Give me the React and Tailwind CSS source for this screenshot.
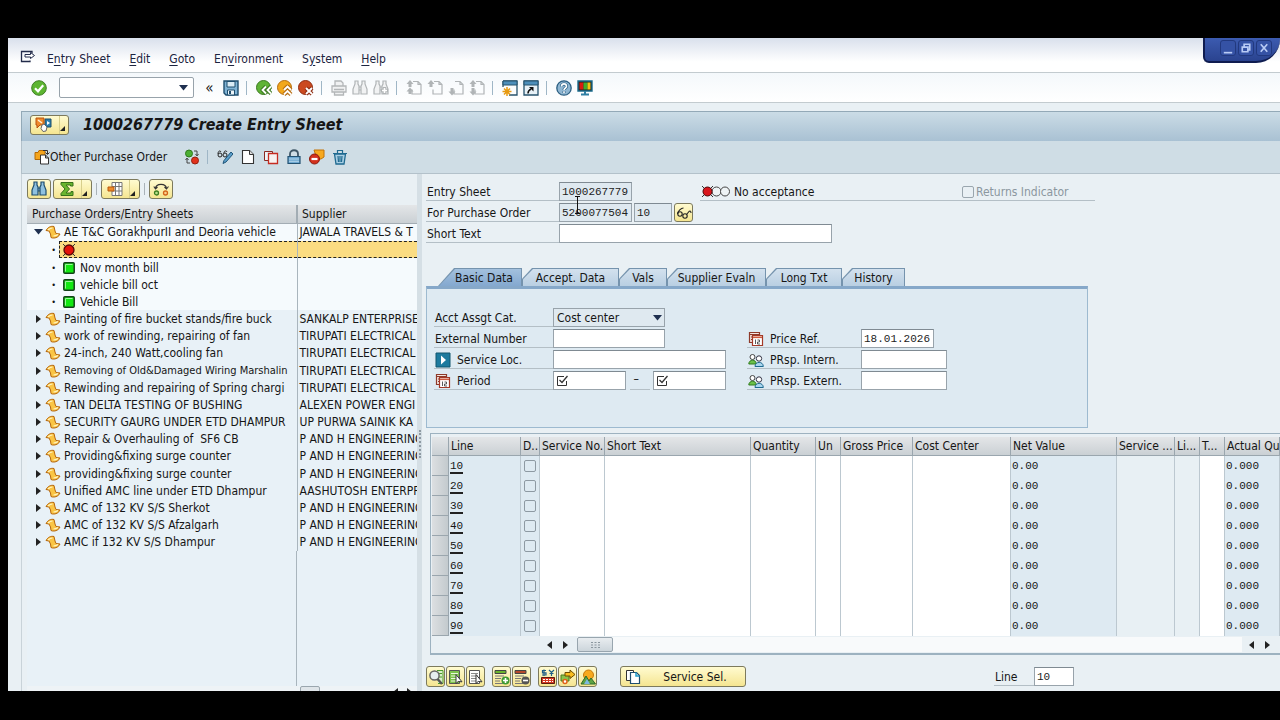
import React, { useState } from 'react';

const Svg = ({ size = 16, w, children }) => (
    <svg width={w || size} height={size} viewBox={`0 0 ${w || size} ${size}`} fill="none" className="shrink-0" aria-hidden="true">
        {children}
    </svg>
);

/* ---------- icons ---------- */
const CheckIcon = () => (
    <Svg>
        <circle cx="8" cy="8" r="7.3" fill="#5cb531" stroke="#3f7d25" />
        <path d="M4 8.3l3 3 5.2-6" stroke="#fff" strokeWidth="2.2" />
    </Svg>
);
const SaveIcon = () => (
    <Svg>
        <path d="M1 1h14v14H3l-2-2z" fill="#7fb2d4" stroke="#1f4e6e" strokeWidth="1.4" />
        <path d="M4 1.5h8V7H4z" fill="#d9ebf5" stroke="#1f4e6e" />
        <path d="M4.5 10h7v5h-7z" fill="#eef6fa" stroke="#1f4e6e" />
        <path d="M6 11h2v3H6z" fill="#1f4e6e" />
    </Svg>
);
const RoundIcon = ({ fill, edge, mark }) => (
    <Svg>
        <circle cx="7.5" cy="7.5" r="7" fill={fill} stroke={edge} />
        <path d={mark} stroke={edge} strokeWidth="4" strokeLinejoin="round" />
        <path d={mark} stroke="#fff" strokeWidth="1.8" />
    </Svg>
);
const BackIcon = () => <RoundIcon fill="#5fb336" edge="#3d7a22" mark="M10 6.5L6.5 10l3.5 3.5M15 6.5L11.5 10l3.5 3.5" />;
const UpIcon = () => <RoundIcon fill="#f2a81d" edge="#b56c10" mark="M7 10l3.5-3.5L14 10M7 14.5L10.5 11l3.5 3.5" />;
const CancelIcon = () => <RoundIcon fill="#cb4a20" edge="#8f2d12" mark="M8 8l6 6M14 8l-6 6" />;
const PrintIcon = () => (
    <Svg>
        <path d="M4 6V1h6l2 2v3M1 6h14v6H1zM3.5 12v3h9v-3M3 9.5h10" stroke="#b3b6b8" strokeWidth="1.3" fill="#f0f1f2" />
    </Svg>
);
const Binoculars = ({ stroke, fill, plus }) => (
    <Svg>
        <path d="M3 1h3v3l1 2v8H1V9l2-5zM10 1h3v3l2 5v5H9V6l1-2zM7 7h2v3H7z" fill={fill} stroke={stroke} strokeWidth="1.2" />
        {plus && <path d="M11.5 7v7M8 10.5h7" stroke={stroke} strokeWidth="3.6" />}
        {plus && <path d="M11.5 8v5M9 10.5h5" stroke="#fff" strokeWidth="1.6" />}
    </Svg>
);
const PageIcon = ({ dir }) => (
    <Svg>
        <path d="M7 1.5h5l3 3V14H6V9.5M12 1.5v3h3" stroke="#b0b4b6" strokeWidth="1.2" />
        {(dir === 'first' || dir === 'up' || dir === 'last') && <path d="M4 0l3.5 4h-2v3h-3V4h-2z" fill="#b0b4b6" />}
        {(dir === 'down' || dir === 'last') && <path d="M4 15.5L.5 11.5h2V8h3v3.5h2z" fill="#b0b4b6" />}
        {dir === 'first' && <path d="M4 7.5l3.5 4h-2V14h-3v-2.5h-2z" fill="#b0b4b6" />}
    </Svg>
);
const SessionIcon = () => (
    <Svg>
        <path d="M1 1h14v14H7M1 1v6" stroke="#27536d" strokeWidth="1.3" />
        <path d="M1 1h14v4H1z" fill="#4d8fbb" stroke="#27536d" />
        <path d="M5 7v9M.5 11.5h9M2 8.5l6 6M8 8.5l-6 6" stroke="#e79a12" strokeWidth="1.5" />
    </Svg>
);
const ShortcutIcon = () => (
    <Svg>
        <path d="M1 1h14v14H1z" fill="#e7f1f7" stroke="#27536d" strokeWidth="1.3" />
        <path d="M1 1h14v4H1z" fill="#4d8fbb" stroke="#27536d" />
        <path d="M5 13.5c0-2.5 1-3.5 3-4.5" stroke="#111" strokeWidth="1.5" />
        <path d="M6 7h4.5v4.5z" fill="#111" />
    </Svg>
);
const HelpIcon = () => (
    <Svg>
        <circle cx="8" cy="8" r="7.2" fill="#8fb6d2" stroke="#2c5f82" strokeWidth="1.3" />
        <path d="M5.5 6.5c0-3.5 5-3.5 5 0C10.5 8 8 8 8 10M8 11.3v1.7" stroke="#2c5f82" strokeWidth="3" />
        <path d="M5.5 6.5c0-3.5 5-3.5 5 0C10.5 8 8 8 8 10M8 11.3v1.7" stroke="#fff" strokeWidth="1.6" />
    </Svg>
);
const MonitorIcon = () => (
    <Svg>
        <path d="M1 1h14v10H1z" fill="#222" stroke="#1a6a8a" strokeWidth="1.4" />
        <path d="M2.5 2.5h4v7h-4z" fill="#d81c12" />
        <path d="M6.5 2.5h4v7h-4z" fill="#3fae2a" />
        <path d="M10.5 2.5h3v7h-3z" fill="#f3c614" />
        <path d="M8 11v3M4 14.5h8" stroke="#2f7fa3" strokeWidth="2" />
    </Svg>
);
const ExitMenuIcon = () => (
    <Svg>
        <path d="M10 11.5v1H1.5v-10H12v2" stroke="#222b4a" strokeWidth="1.3" />
        <path d="M5 5.5h5.5V3.5l4 3-4 3V8H5z" fill="#fff" stroke="#222b4a" />
    </Svg>
);
const ServicesIcon = () => (
    <Svg w={18}>
        <path d="M10 2h6v8h-6z" fill="#2d7fae" stroke="#1d4e6b" />
        <path d="M12 4l3 2-3 2z" fill="#fff" />
        <path d="M1 1h8v7H5l-3 3V8H1z" fill="#ef8a2b" stroke="#b8530e" />
        <path d="M3 3l4 3" stroke="#fff2d8" strokeWidth="1.5" />
        <path d="M7 8l2-1 3 3-1 4-3 .5-2-3z" fill="#fff" stroke="#666" />
    </Svg>
);
const OtherOrderIcon = () => (
    <Svg>
        <path d="M1 3.500h3l1-2h6v9H1z" fill="#f5a51c" stroke="#b46a08" />
        <path d="M6.5 6h5l3 3v6h-8zM11.5 6v3h3" fill="#fff" stroke="#333" />
        <path d="M9 1.500h4.500V5M11.500 3.500l2 2 2-2" stroke="#333" />
    </Svg>
);
const ToggleIcon = () => (
    <Svg>
        <circle cx="5" cy="4.5" r="3.5" fill="#4caf33" stroke="#2f7a1c" />
        <circle cx="11" cy="11.5" r="3.5" fill="#e2311c" stroke="#93200f" />
        <path d="M10 2h3v4M11.5 5l1.5 2 1.5-2M6 14H3v-4M1.5 11L3 9l1.5 2" stroke="#444" />
    </Svg>
);
const DisplayChangeIcon = () => (
    <Svg>
        <path d="M1 5c0-3 2-4 3-2M7 4c0-2 2-3 3-1" stroke="#222" />
        <circle cx="3" cy="6" r="2" stroke="#222" />
        <circle cx="8" cy="6" r="2" stroke="#222" />
        <path d="M14 3l2 2-7 8-3 1.5 1-3z" fill="#5c9fca" stroke="#1f5579" />
    </Svg>
);
const NewIcon = () => (
    <Svg>
        <path d="M2.5 1.5h7l4 4v9h-11z" fill="#fff" stroke="#333" strokeWidth="1.1" />
        <path d="M9.5 1.5v4h4" fill="#ddd" stroke="#333" />
    </Svg>
);
const CopyRedIcon = () => (
    <Svg>
        <path d="M1.5 2.5h8v9h-8z" fill="#eef3f6" stroke="#8a2a22" />
        <path d="M5.5 4.5h9v10h-9z" fill="#f7f2f1" stroke="#c62c22" strokeWidth="1.3" />
    </Svg>
);
const LockIcon = () => (
    <Svg>
        <path d="M4 8V5c0-5 8-5 8 0v3" stroke="#3f5666" strokeWidth="1.8" />
        <path d="M2 7.5h12v7H2z" fill="#6fa9d2" stroke="#235272" strokeWidth="1.2" />
        <path d="M3 10h10M3 12.3h10" stroke="#b5d5ea" />
    </Svg>
);
const RejectIcon = () => (
    <Svg>
        <path d="M5 1h10v7l-3 2H8z" fill="#f7a91e" stroke="#c27307" />
        <circle cx="5.5" cy="10" r="5" fill="#d3301c" stroke="#8a1a0c" />
        <path d="M2.5 10h6" stroke="#fff" strokeWidth="2.2" />
    </Svg>
);
const TrashIcon = () => (
    <Svg>
        <path d="M2.5 5h11l-1.5 10H4z" fill="#a9cfe4" stroke="#1f6a90" strokeWidth="1.3" />
        <path d="M1 4.5h14M5.5 4V1.5h5V4M6 7l.5 6M10 7l-.5 6M8 7v6" stroke="#1f6a90" strokeWidth="1.2" />
    </Svg>
);
const SumIcon = () => (
    <Svg>
        <path d="M2 1.5h12V5h-2.5V4H7l3.5 4L7 12h5v-1.5h2v4H2v-2L6 8 2 3.5z" fill="#6ab52f" stroke="#37701a" />
    </Svg>
);
const LayoutIcon = () => (
    <Svg>
        <path d="M5 1.5h10v13H5zM5 5.5h10M5 10h10M8.5 1.5v13M12 1.5v13" fill="#fff" stroke="#777" />
        <path d="M1 6h6v4H1z" fill="#f08c2a" stroke="#b8590c" />
    </Svg>
);
const SwapIcon = () => (
    <Svg>
        <path d="M2.5 7.5C3 2 13 2 13.5 7.5M.8 5.5l1.7 2.5 2-2M15.5 5.5L13.5 8l-2-2" stroke="#333" strokeWidth="1.1" />
        <circle cx="3.5" cy="12" r="2" fill="#b9e08c" stroke="#3d7d20" strokeWidth="1.3" />
        <circle cx="12.5" cy="12" r="2" fill="#fbd08a" stroke="#d3641a" strokeWidth="1.3" />
    </Svg>
);
const OrderIcon = () => (
    <Svg w={16} size={14}>
        <path d="M1 5.5C3 2 6 .8 9 1.5l1 4.500 1 2.500 4 .5c-1 2.500-4 4.500-7.500 4L6 12.500 5.500 9 4 6z" fill="#fac545" stroke="#b5650c" />
        <path d="M3 5c1.5-1.5 3-2 4.500-2M8.500 11c1.500 0 3-.5 4.500-1.500" stroke="#fff3c4" strokeWidth="1.2" />
    </Svg>
);
const RedLight = () => (
    <Svg size={14}>
        <path d="M1 1l12 12M13 1L1 13" stroke="#333" />
        <circle cx="7" cy="7" r="5" fill="#e3120b" stroke="#5a0805" strokeWidth="1.3" />
    </Svg>
);
const GreenLight = () => (
    <Svg size={12}>
        <rect x=".8" y=".8" width="10.4" height="10.4" rx="1" fill="#12e812" stroke="#14401a" strokeWidth="1.5" />
        <path d="M2.5 9.5v-7h7" stroke="#9af79a" />
    </Svg>
);
const TrafficIcon = () => (
    <Svg w={29} size={13}>
        <circle cx="15.5" cy="6.5" r="4.5" fill="#eef3f5" stroke="#444" />
        <circle cx="24" cy="6.5" r="4.5" fill="#eef3f5" stroke="#444" />
        <path d="M1 1l11 11M12 1L1 12" stroke="#333" />
        <circle cx="6.5" cy="6.5" r="4.5" fill="#d9161c" stroke="#4a0708" />
    </Svg>
);
const GlassesIcon = () => (
    <Svg>
        <circle cx="4" cy="9" r="2.2" stroke="#222" strokeWidth="1.1" />
        <circle cx="9" cy="11" r="2.2" stroke="#222" strokeWidth="1.1" />
        <path d="M1.500 9C2 6 5 3 7.500 3M10.500 9.500L13 6.500c1-1 2-.5 2 1.500" stroke="#222" strokeWidth="1.1" />
    </Svg>
);
const CalendarIcon = () => (
    <Svg>
        <path d="M1.5 1.5h10v10h-10z" fill="#f4e6e2" stroke="#8e3a2a" strokeWidth="1.2" />
        <path d="M2 3.5h9M3 6h2M3 8.5h2" stroke="#8e3a2a" />
        <path d="M4.5 4.5h10v10h-10z" fill="#fff" stroke="#a33a28" strokeWidth="1.2" />
        <path d="M5 6.3h9" stroke="#cf5a3e" strokeWidth="1.6" />
        <path d="M7.5 8.5v4.5M9.5 9h2v2h-2v2H12" stroke="#333" strokeWidth=".8" />
    </Svg>
);
const ArrowBoxIcon = () => (
    <Svg>
        <path d="M1 1h14v14H1z" fill="#1d7a9e" stroke="#13566f" />
        <path d="M6 3.5l5 4.5-5 4.5z" fill="#fff" />
    </Svg>
);
const PeopleIcon = () => (
    <Svg>
        <circle cx="4.5" cy="5" r="2.5" fill="#fff" stroke="#444" />
        <path d="M.8 12c0-5 7.5-5 7.5 0z" fill="#6cc04a" stroke="#2f7a1c" />
        <circle cx="11" cy="6.5" r="2.7" fill="#fff" stroke="#334" />
        <path d="M7 14.5c0-5.5 8.3-5.5 8.3 0z" fill="#a9d5ee" stroke="#1f6a90" />
    </Svg>
);
const TickBox = () => (
    <Svg size={12}>
        <path d="M8 1.5H1.5v9h9V6" stroke="#333" />
        <path d="M3.5 5l2.5 2.5L11.5 1" stroke="#333" strokeWidth="1.3" />
    </Svg>
);
const SheetIcon = ({ kind }) => (
    <Svg>
        <path d="M1.5 1.5h10v13h-10z" fill={kind === 'all' ? '#7cc24c' : '#fff'} stroke="#555" />
        <path d="M3 4.5h7M3 7h7M3 9.5h7M3 12h7" stroke={kind === 'all' ? '#e9f7dc' : '#888'} />
        <path d="M8 5.5v9l2.2-2 3.8.3z" fill="#fff" stroke="#333" />
    </Svg>
);
const DetailIcon = () => (
    <Svg>
        <path d="M9 1.5h6v13h-5M11 4.5h3M11 8h3" stroke="#4b9a2c" fill="#d9efc8" />
        <circle cx="6.5" cy="6.5" r="4.6" fill="#e6eef0" stroke="#666" strokeWidth="1.5" />
        <path d="M9.5 10l4.5 5" stroke="#555" strokeWidth="2.5" />
    </Svg>
);
const LineIcon = ({ color, minus }) => (
    <Svg>
        <path d="M1 1.5h11v3H1z" fill={color} stroke="#444" />
        <path d="M1 7h9M1 9.5h6M1 14.5h8M1 12h5" stroke="#777" />
        <circle cx="11.5" cy="11.5" r="4" fill={minus ? '#555' : '#3f9a34'} />
        <path d={minus ? 'M9 11.5h5' : 'M9 11.5h5M11.5 9v5'} stroke="#fff" strokeWidth="1.6" />
    </Svg>
);
const ConditionIcon = () => (
    <Svg>
        <path d="M6 1.5H2.5v2.3H6V6H2M4 .5V7M9 1l2.5 2.5L14 1M11.5 3.5V7M9.5 4.5h4" stroke="#1f5f86" strokeWidth="1.2" />
        <path d="M1.5 8.5h13v6h-13z" fill="#d43a24" stroke="#5d180d" />
        <path d="M3 10.5h10M3 12.5h10" stroke="#fff" strokeDasharray="2 1" />
    </Svg>
);
const AccountIcon = () => (
    <Svg>
        <path d="M1 6h8v6H1z" fill="#8bc34a" stroke="#4b7a1e" />
        <path d="M5 3.5h5V1l5 4.5-5 4V7H5z" fill="#f9bd1f" stroke="#6e4c00" />
        <circle cx="5" cy="12.5" r="2" fill="#fff" stroke="#e0641a" strokeWidth="1.5" />
    </Svg>
);
const SunIcon = () => (
    <Svg>
        <circle cx="8.5" cy="6" r="5" fill="#f7a91e" stroke="#c77a0c" />
        <path d="M1 15L6 7l3 5 2-3 4.5 6z" fill="#5da343" stroke="#2d6a2a" />
        <path d="M4 15l3-5 3 5z" fill="#7db9e0" />
    </Svg>
);
const PagesIcon = () => (
    <Svg>
        <path d="M1.5 1.5h7v10h-7z" fill="#fff" stroke="#333" />
        <path d="M5.5 3.5h6l3 3v8h-9z" fill="#fff" stroke="#1f4e6e" strokeWidth="1.2" />
        <path d="M11 3.5V7h3.5" stroke="#1f9cc9" strokeWidth="1.5" />
    </Svg>
);
const Caret = () => (
    <svg width="9" height="6" viewBox="0 0 9 6" className="shrink-0" aria-hidden="true"><path d="M0 0h9L4.5 5.5z" fill="#1f3050" /></svg>
);
const Tri = ({ left }) => (
    <svg width="6" height="8" viewBox="0 0 6 8" className="shrink-0" aria-hidden="true"><path d={left ? 'M6 0v8L1 4z' : 'M0 0v8l5-4z'} fill="#222" /></svg>
);

/* ---------- data ---------- */
// [text before the access key, access key, text after it]
const menus = [['E', 'n', 'try Sheet'], ['', 'E', 'dit'], ['', 'G', 'oto'], ['En', 'v', 'ironment'], ['S', 'y', 'stem'], ['', 'H', 'elp']];

// third entry: smaller type for a name too wide for the column
const orders = [
    ['Painting of fire bucket stands/fire buck', 'SANKALP ENTERPRISE'],
    ['work of rewinding, repairing of fan', 'TIRUPATI ELECTRICAL'],
    ['24-inch, 240 Watt,cooling fan', 'TIRUPATI ELECTRICAL'],
    ['Removing of Old&Damaged Wiring Marshalin', 'TIRUPATI ELECTRICAL', 'text-[11px]'],
    ['Rewinding and repairing of Spring chargi', 'TIRUPATI ELECTRICAL'],
    ['TAN DELTA TESTING OF BUSHING', 'ALEXEN POWER ENGI'],
    ['SECURITY GAURG UNDER ETD DHAMPUR', 'UP PURWA SAINIK KA'],
    ['Repair & Overhauling of  SF6 CB', 'P AND H ENGINEERING'],
    ['Providing&fixing surge counter', 'P AND H ENGINEERING'],
    ['providing&fixing surge counter', 'P AND H ENGINEERING'],
    ['Unified AMC line under ETD Dhampur', 'AASHUTOSH ENTERPR'],
    ['AMC of 132 KV S/S Sherkot', 'P AND H ENGINEERING'],
    ['AMC of 132 KV S/S Afzalgarh', 'P AND H ENGINEERING'],
    ['AMC if 132 KV S/S Dhampur', 'P AND H ENGINEERING'],
];
const tabs = ['Basic Data', 'Accept. Data', 'Vals', 'Supplier Evaln', 'Long Txt', 'History'];
const tabWidths = ['w-[84px]', 'w-[97px]', 'w-12', 'w-[99px]', 'w-[76px]', 'w-[63px]'];
const lines = [10, 20, 30, 40, 50, 60, 70, 80, 90];
const columns = [
    ['', 'w-[17px]'], ['Line', 'w-[72px]'], ['D..', 'w-[19px]'], ['Service No.', 'w-[65px]'], ['Short Text', ''],
    ['Quantity', 'w-[65px]'], ['Un', 'w-[25px]'], ['Gross Price', 'w-[72px]'], ['Cost Center', 'w-[98px]'],
    ['Net Value', 'w-[106px]'], ['Service ...', 'w-[58px]'], ['Li...', 'w-[25px]'], ['T...', 'w-[25px]'], ['Actual Qu', 'w-[55px]'],
];

const yellowBtn = 'flex items-center justify-center rounded-[3px] border border-[#7d7a5c] bg-linear-to-b from-[#fffbd0] to-[#f5e590]';
const box = 'h-[19px] border border-[#98a3ab] border-t-[#7f8a92] px-[2px] font-["Liberation_Mono",monospace] text-[11px] text-[#222]';
const field = `${box} bg-white`;
const readOnlyField = `${box} bg-[#dfe9f0]`;
const label = 'flex h-[19px] items-center gap-[6px] border-b border-[#b4bfc6] pt-px pl-px whitespace-nowrap';

const ToolBtn = ({ name, children }) => (
    <button aria-label={name} className="flex h-5 w-[21px] shrink-0 items-center justify-center">{children}</button>
);
const Sep = () => <span className="mr-[6px] ml-[5px] h-[14px] w-px shrink-0 bg-[#9fb6c6]" />;

const MenuBar = () => (
    <nav className="relative flex h-[35px] shrink-0 items-center gap-[19px] border-b border-[#c3cbcf] bg-linear-to-b from-[#d9e0ec] to-white to-70% pt-[7px] pl-3 text-[#1c2440]">
        <button aria-label="System menu" className="-mr-2 pb-1"><ExitMenuIcon /></button>
        {menus.map(([a, key, b]) => (
            <button key={a + key + b}>{a}<u className="underline-offset-2">{key}</u>{b}</button>
        ))}
        <div className="absolute top-0 right-0 flex h-[25px] w-[77px] items-start justify-center gap-[2px] rounded-bl-md rounded-br-[24px] border-b-2 border-l-2 border-[#0f1c50] bg-linear-to-b from-[#3c5bb0] to-[#2a438f] pt-[2px] pl-[6px]">
            {['M3 12.5h9', 'M5.5 5.5v-2h6v6h-2M3.5 6.5h6v5h-6z', 'M4 3.5l7 8M11 3.5l-7 8'].map((d, i) => (
                <button key={d} aria-label={['Minimize', 'Restore', 'Close'][i]} className="rounded-[3px] border border-[#22397f] bg-[#3552a5]">
                    <svg width="14" height="14" viewBox="0 0 15 15" fill="none"><path d={d} stroke="#b9cbf5" strokeWidth="1.8" /></svg>
                </button>
            ))}
        </div>
    </nav>
);

const StandardToolbar = () => (
    <div className="flex h-[30px] shrink-0 items-center border-b border-[#c3cbcf] bg-linear-to-b from-[#f4f8fb] to-white pl-5">
        <ToolBtn name="Enter"><CheckIcon /></ToolBtn>
        <div className="mr-[5px] ml-[10px] flex h-[21px] w-[135px] items-center rounded-xs border border-[#98a3ab] bg-white pr-[5px]">
            <input aria-label="Command" className="h-full min-w-0 flex-1 px-1 outline-none" />
            <button aria-label="Command history"><Caret /></button>
        </div>
        <button aria-label="Hide command field" className="w-[21px] text-[15px] leading-4">«</button>
        <ToolBtn name="Save"><SaveIcon /></ToolBtn>
        <Sep />
        <ToolBtn name="Back"><BackIcon /></ToolBtn>
        <ToolBtn name="Exit"><UpIcon /></ToolBtn>
        <ToolBtn name="Cancel"><CancelIcon /></ToolBtn>
        <Sep />
        <ToolBtn name="Print"><PrintIcon /></ToolBtn>
        <ToolBtn name="Find"><Binoculars stroke="#b0b4b6" fill="#f1f2f3" /></ToolBtn>
        <ToolBtn name="Find next"><Binoculars stroke="#b0b4b6" fill="#f1f2f3" plus /></ToolBtn>
        <Sep />
        <ToolBtn name="First page"><PageIcon dir="first" /></ToolBtn>
        <ToolBtn name="Previous page"><PageIcon dir="up" /></ToolBtn>
        <ToolBtn name="Next page"><PageIcon dir="down" /></ToolBtn>
        <ToolBtn name="Last page"><PageIcon dir="last" /></ToolBtn>
        <Sep />
        <ToolBtn name="New session"><SessionIcon /></ToolBtn>
        <ToolBtn name="Create shortcut"><ShortcutIcon /></ToolBtn>
        <Sep />
        <ToolBtn name="Help"><HelpIcon /></ToolBtn>
        <ToolBtn name="Layout"><MonitorIcon /></ToolBtn>
    </div>
);

const Corner = () => <svg width="5" height="5" viewBox="0 0 5 5" className="mt-2 shrink-0" aria-hidden="true"><path d="M5 0v5H0z" fill="#222" /></svg>;

const SplitBtn = ({ name, children }) => (
    <button aria-label={name} className={`${yellowBtn} h-5 w-[39px]`}>
        {children}
        <span className="ml-[6px] h-full w-px bg-[#d8cf8c]" />
        <Corner />
    </button>
);

const Bullet = () => <span className="mr-1 w-8 text-right text-[9px] leading-3"><span className="pr-[3px]">•</span></span>;

const TreePanel = () => (
    <section className="flex w-[396px] shrink-0 flex-col border-l border-[#c9d3d9] pt-[5px] pl-[5px]">
        <div className="flex h-5 gap-[2px]">
            <button aria-label="Find" className={`${yellowBtn} w-6`}><Binoculars stroke="#1f4e6e" fill="#8fc1e0" /></button>
            <SplitBtn name="Total"><SumIcon /></SplitBtn>
            <span className="mx-[2px] my-1 w-px bg-[#a9b2b8]" />
            <SplitBtn name="Choose layout"><LayoutIcon /></SplitBtn>
            <span className="mx-[2px] my-1 w-px bg-[#a9b2b8]" />
            <button aria-label="Exchange" className={`${yellowBtn} w-6`}><SwapIcon /></button>
        </div>
        <div className="mt-[6px] flex flex-1 flex-col bg-[#e8f1f7]">
            <table className="h-[346px] w-full table-fixed border-collapse whitespace-nowrap">
                <thead>
                    <tr className="h-[18px] bg-linear-to-b from-[#e4e6e8] to-[#cad0d4] text-left">
                        <th className="w-[270px] border-r-2 border-b border-[#a3adb4] p-0 pl-[5px] font-normal">Purchase Orders/Entry Sheets</th>
                        <th className="border-b border-[#a3adb4] p-0 pl-1 font-normal">Supplier</th>
                    </tr>
                </thead>
                <tbody>
                    <tr className="bg-[#f5fafd]">
                        <td className="border-r border-[#a9b5bd] p-0">
                            <div className="flex items-center pl-[7px]">
                                <Caret /><span className="mr-[3px] ml-[2px] flex"><OrderIcon /></span>AE T&amp;C GorakhpurII and Deoria vehicle
                            </div>
                        </td>
                        <td className="p-0 pl-[2px]">JAWALA TRAVELS &amp; T</td>
                    </tr>
                    <tr className="bg-[#f5fafd]">
                        <td className="border-r border-[#a9b5bd] p-0">
                            <div className="flex h-[17px] items-center">
                                <span className="w-8 text-right text-[9px] leading-3"><span className="pr-[3px]">•</span></span>
                                <span className="flex h-full flex-1 items-center border-y border-l border-dashed border-[#222] bg-[#fbdc82] pl-[2px]"><RedLight /></span>
                            </div>
                        </td>
                        <td className="p-0"><div className="h-[17px] border-y border-dashed border-[#222] bg-[#fbdc82]" /></td>
                    </tr>
                    {['Nov month bill', 'vehicle bill oct', 'Vehicle Bill'].map((t) => (
                        <tr key={t} className="bg-[#f5fafd]">
                            <td className="border-r border-[#a9b5bd] p-0">
                                <div className="flex items-center">
                                    <Bullet /><GreenLight /><span className="ml-[5px]">{t}</span>
                                </div>
                            </td>
                            <td />
                        </tr>
                    ))}
                    {orders.map(([name, supplier, size = ''], i) => (
                        <tr key={i}>
                            <td className="border-r border-[#a9b5bd] p-0">
                                <div className="flex items-center pl-[9px]">
                                    <Tri /><span className="mr-[3px] ml-[3px] flex"><OrderIcon /></span><span className={`whitespace-pre ${size}`}>{name}</span>
                                </div>
                            </td>
                            <td className="overflow-hidden p-0 pl-[2px]">{supplier}</td>
                        </tr>
                    ))}
                </tbody>
            </table>
            <div className="ml-[269px] w-px flex-1 bg-[#a9b5bd]" />
            <div className="flex h-[5px] items-start overflow-hidden bg-[#eef3f6] pl-[273px]">
                <span className="h-2 w-5 rounded-t-xs border border-[#9aa6ae] bg-[#dfe5e9]" />
                <span className="mt-[2px] ml-[72px] flex gap-[9px]"><Tri left /><Tri /></span>
            </div>
        </div>
    </section>
);

const HeaderForm = () => (
    <div className="flex gap-[7px] pt-2">
        <div className="grid grid-cols-[133px_273px] gap-y-[2px]">
            <label htmlFor="entry" className={label}>Entry Sheet</label>
            <div className="relative flex">
                <input id="entry" readOnly defaultValue="1000267779" className={`${readOnlyField} w-[73px]`} />
                {/* text cursor resting over the two order fields */}
                <svg width="7" height="18" viewBox="0 0 7 18" className="absolute top-[14px] left-[15px]" aria-hidden="true">
                    <path d="M1 .5h5M3.5 1v16M1 17.5h5" stroke="#111" />
                </svg>
            </div>
            <label htmlFor="po" className={label}>For Purchase Order</label>
            <div className="flex items-center gap-[2px]">
                <input id="po" readOnly defaultValue="5200077504" className={`${readOnlyField} w-[73px]`} />
                <input aria-label="Item" readOnly defaultValue="10" className={`${readOnlyField} w-[38px]`} />
                <button aria-label="Display order" className={`${yellowBtn} h-[19px] w-[19px]`}><GlassesIcon /></button>
            </div>
            <label htmlFor="short" className={label}>Short Text</label>
            <input id="short" className={`${field} w-full`} />
        </div>
        <div className="-ml-[139px] flex h-[19px] w-[395px] items-center border-b border-[#b4bfc6] pt-px pl-px">
            <TrafficIcon /><span className="ml-1">No acceptance</span>
            <label className="ml-auto flex w-[133px] items-center gap-[2px] text-[#8b979f]">
                <input type="checkbox" disabled className="size-3 appearance-none rounded-[2px] border border-[#9aa6ae] bg-[#e9f0f4]" />
                Returns Indicator
            </label>
        </div>
    </div>
);

const TabStrip = ({ active, onSelect }) => (
    <div role="tablist" className="mt-[25px] flex h-[18px] pl-3">
        {tabs.map((t, i) => (
            <button
                key={t}
                role="tab"
                aria-selected={active === i}
                onClick={() => onSelect(i)}
                className={`${tabWidths[i]} bg-[#7593ad] pt-px pr-px pl-px ${i === 0 ? '[clip-path:polygon(0_100%,16px_0,100%_0,100%_100%)]' : '[clip-path:polygon(0_60%,10px_0,100%_0,100%_100%,0_100%)]'}`}
            >
                <span className={`flex h-full items-center justify-center whitespace-nowrap ${i === 0 ? 'pl-2 [clip-path:polygon(0_100%,16px_0,100%_0,100%_100%)]' : '[clip-path:polygon(0_60%,10px_0,100%_0,100%_100%,0_100%)]'} ${active === i ? 'bg-linear-to-b from-[#a3c1de] to-[#84a8cf]' : 'bg-linear-to-b from-[#d3e1ee] to-[#b9cfe2]'}`}>
                    {t}
                </span>
            </button>
        ))}
    </div>
);

const BasicData = () => (
    <div className="flex h-[142px] w-[662px] gap-[21px] border border-t-[3px] border-[#9dbad0] border-t-[#86a8c9] bg-[#deeaf2] pt-[19px] pl-[7px]">
        <div className="grid auto-rows-[19px] grid-cols-[119px_173px] content-start gap-y-[2px]">
            <label htmlFor="cat" className={label}>Acct Assgt Cat.</label>
            <div className="relative w-28">
                <select id="cat" className="h-[19px] w-full appearance-none border border-[#98a3ab] bg-[#dfe9f0] pl-[3px] leading-4">
                    <option>Cost center</option>
                </select>
                <span className="pointer-events-none absolute top-[7px] right-[3px]"><Caret /></span>
            </div>
            <label htmlFor="ext" className={label}>External Number</label>
            <input id="ext" className={`${field} w-28`} />
            <label htmlFor="loc" className={label}><ArrowBoxIcon />Service Loc.</label>
            <input id="loc" className={`${field} w-full`} />
            <label htmlFor="from" className={label}><CalendarIcon />Period</label>
            <div className="flex items-center justify-between">
                <div className={`${field} flex w-[73px] items-center`}><TickBox /><input id="from" className="w-full min-w-0 outline-none" /></div>
                <span className="h-full w-5 border-b border-[#b4bfc6] pl-1">–</span>
                <div className={`${field} flex w-[73px] items-center`}><TickBox /><input aria-label="Period to" className="w-full min-w-0 outline-none" /></div>
            </div>
        </div>
        <div className="grid auto-rows-[19px] grid-cols-[114px_86px] content-start gap-y-[2px] pt-[21px]">
            <label htmlFor="price" className={label}><CalendarIcon />Price Ref.</label>
            <input id="price" defaultValue="18.01.2026" className={`${field} w-[73px]`} />
            <label htmlFor="intern" className={label}><PeopleIcon />PRsp. Intern.</label>
            <input id="intern" className={`${field} w-full`} />
            <label htmlFor="extern" className={label}><PeopleIcon />PRsp. Extern.</label>
            <input id="extern" className={`${field} w-full`} />
        </div>
    </div>
);

const cell = 'h-5 border-r border-[#bcc8d0] p-0';

const LinesTable = () => (
    <div className="mt-[5px] ml-1 border-y border-b-2 border-l border-[#9db2c0] pt-[3px] pl-px">
        <table className="w-full table-fixed border-separate border-spacing-0 whitespace-nowrap">
            <thead>
                <tr>
                    {columns.map(([name, width]) => (
                        <th key={name + width} className={`${width} h-[19px] border-r border-b border-[#9aa6ae] bg-linear-to-b from-[#e4e6e8] to-[#cad0d4] p-0 pl-[2px] text-left font-normal`}>{name}</th>
                    ))}
                </tr>
            </thead>
            <tbody className='font-["Liberation_Mono",monospace] text-[11px]'>
                {lines.map((n) => (
                    <tr key={n}>
                        <td className="h-5 border-r border-b border-[#9aa6ae] bg-linear-to-r from-[#dcdfe1] to-[#c3cace] p-0" />
                        <td className={`${cell} bg-[#deeaf2]`}><a href="#line" className="ml-px border-b-2 border-[#222] leading-3">{n}</a></td>
                        <td className={`${cell} bg-[#deeaf2]`}>
                            <input type="checkbox" aria-label={`Delete line ${n}`} className="mx-auto block size-3 appearance-none rounded-[2px] border border-[#8e9aa3]" />
                        </td>
                        <td className={`${cell} bg-white`} />
                        <td className={`${cell} bg-white`} />
                        <td className={`${cell} bg-white`} />
                        <td className={`${cell} bg-white`} />
                        <td className={`${cell} bg-white`} />
                        <td className={`${cell} bg-white`} />
                        <td className={`${cell} bg-[#deeaf2] pl-px`}>0.00</td>
                        <td className={`${cell} bg-[#e8f0f4]`} />
                        <td className={`${cell} bg-[#e8f0f4]`} />
                        <td className={`${cell} bg-white`} />
                        <td className={`${cell} bg-[#deeaf2] pl-px`}>0.000</td>
                    </tr>
                ))}
            </tbody>
        </table>
        <div className="flex h-[17px] items-center pr-1 pl-[108px]">
            <button aria-label="Scroll left" className="flex w-[17px] justify-center"><Tri left /></button>
            <button aria-label="Scroll right" className="flex w-[17px] justify-center"><Tri /></button>
            <div className="ml-[3px] flex h-[15px] flex-1 bg-[#f8fafb]">
                <span className="flex h-[15px] w-9 items-center justify-center rounded-xs border border-[#98a5ae] bg-linear-to-b from-[#e9edf0] to-[#ccd5db]">
                    <svg width="9" height="6" viewBox="0 0 9 6" aria-hidden="true"><path d="M0 .5h9M0 3h9M0 5.5h9" stroke="#8b979f" strokeDasharray="2 1.5" /></svg>
                </span>
            </div>
            <button aria-label="Scroll left to start" className="flex w-[17px] justify-center"><Tri left /></button>
            <button aria-label="Scroll right to end" className="flex w-[17px] justify-center"><Tri /></button>
        </div>
    </div>
);

const FooterBar = () => {
    const groups = [
        [['Details', <DetailIcon />], ['Select all', <SheetIcon kind="all" />], ['Deselect all', <SheetIcon />]],
        [['Insert line', <LineIcon color="#6ab52f" />], ['Delete line', <LineIcon color="#b5482c" minus />]],
        [['Conditions', <ConditionIcon />], ['Account assignment', <AccountIcon />], ['Overview', <SunIcon />]],
    ];
    return (
        <div className="mt-[11px] flex h-[21px] items-stretch gap-[7px]">
            {groups.map((g, i) => (
                <div key={i} className="flex gap-px">
                    {g.map(([name, icon]) => (
                        <button key={name} aria-label={name} className={`${yellowBtn} w-[19px]`}>{icon}</button>
                    ))}
                </div>
            ))}
            <button className={`${yellowBtn} ml-4 w-[126px] pl-1`}><PagesIcon /><span className="flex-1 pl-1">Service Sel.</span></button>
            <div className="ml-[241px] flex items-center">
                <label htmlFor="line" className={`${label} w-10`}>Line</label>
                <input id="line" defaultValue="10" className={`${field} w-10`} />
            </div>
        </div>
    );
};

const App = () => {
    const [active, setActive] = useState(0);

    return (
        <div className="h-screen overflow-hidden bg-black pt-[38px] pb-[29px] pl-2 font-['DejaVu_Sans_Condensed','Noto_Sans',sans-serif] text-[12px] leading-4 text-[#161616]">
            <div className="flex h-full flex-col overflow-hidden bg-[#e9f0f4]">
                <MenuBar />
                <StandardToolbar />
                <header className="mt-2 ml-[13px] flex h-[30px] shrink-0 items-center border-t border-l border-[#93a9b7] bg-linear-to-b from-[#cbdce6] to-[#a9c1d3] pb-1 pl-2">
                    <SplitBtn name="Services for object"><ServicesIcon /></SplitBtn>
                    <h1 className="ml-[14px] text-[16px] font-bold italic">1000267779 Create Entry Sheet</h1>
                </header>
                <div className="ml-[13px] flex h-[33px] shrink-0 items-center border-b border-l border-[#b3c1ca] bg-[#cfdde5] pl-3">
                    <button className="flex items-center"><OtherOrderIcon />Other Purchase Order</button>
                    <span className="ml-[14px] flex"><ToolBtn name="Set acceptance"><ToggleIcon /></ToolBtn></span>
                    <Sep />
                    <div className="flex gap-[2px]">
                        <ToolBtn name="Display / change"><DisplayChangeIcon /></ToolBtn>
                        <ToolBtn name="Create"><NewIcon /></ToolBtn>
                        <ToolBtn name="Copy"><CopyRedIcon /></ToolBtn>
                        <ToolBtn name="Lock"><LockIcon /></ToolBtn>
                        <ToolBtn name="Reject"><RejectIcon /></ToolBtn>
                        <ToolBtn name="Delete"><TrashIcon /></ToolBtn>
                    </div>
                </div>
                <main className="ml-[13px] flex min-h-0 flex-1">
                    <TreePanel />
                    <div className="flex w-[5px] shrink-0 flex-col items-center bg-[#d5dfe5] pt-64">
                        <span className="h-7 border-l-2 border-dotted border-[#8e9aa3]" />
                    </div>
                    <section className="min-w-0 flex-1 pl-1">
                        <HeaderForm />
                        <TabStrip active={active} onSelect={setActive} />
                        <BasicData />
                        <LinesTable />
                        <FooterBar />
                    </section>
                </main>
            </div>
        </div>
    );
};

export default App;
